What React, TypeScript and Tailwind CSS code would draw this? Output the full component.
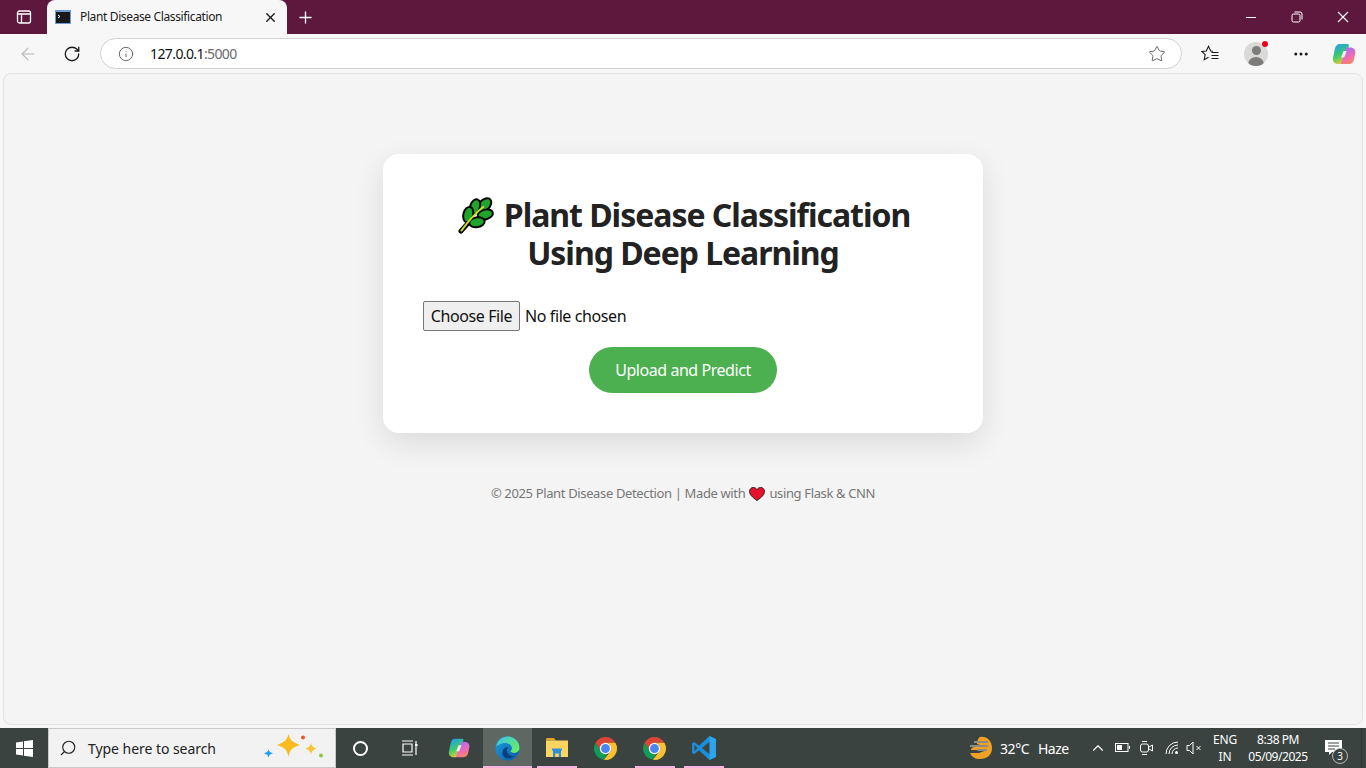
import { ArrowLeft, RotateCw, Info, Star, MoreHorizontal, X, Plus, Search, ChevronUp } from 'lucide-react';

const Copilot = ({ size = 24, id }: { size?: number; id: string }) => (
  <svg width={size} height={size} viewBox="0 0 24 24" className="shrink-0">
    <defs>
      <linearGradient id={`${id}A`} x1="0.2" y1="0" x2="0.6" y2="1">
        <stop offset="0" stopColor="#1f9df0" />
        <stop offset="0.55" stopColor="#3ecb6c" />
        <stop offset="1" stopColor="#f6cf2c" />
      </linearGradient>
      <linearGradient id={`${id}B`} x1="0.3" y1="0" x2="0.7" y2="1">
        <stop offset="0" stopColor="#a86bf2" />
        <stop offset="0.6" stopColor="#ef6db2" />
        <stop offset="1" stopColor="#f9885a" />
      </linearGradient>
    </defs>
    <path d="M8 2h7.500c1.200 0 1.800 1 1.300 2.200L11.500 20c-.6 1.400-1.500 2-3 2H6c-3.500 0-5.500-2.500-5-6L2.800 7C3.500 4 5 2 8 2z" fill={`url(#${id}A)`} />
    <path d="M15 5.500h3.500c3.300 0 5.300 2.300 4.800 5.500L22 17.500c-.7 3-2.500 4.500-5 4.500H9.500c-.8 0-1-.6-.5-1.300L13 10c.5-1.500 1-4.500 2-4.500z" fill={`url(#${id}B)`} />
    <path d="M11.500 9h3.200l-2.500 6.500H9z" fill="#fff" opacity="0.85" />
  </svg>
);

const EdgeLogo = () => (
  <svg width={25} height={25} viewBox="0 0 24 24">
    <defs>
      <linearGradient id="edA" x1="0" y1="0" x2="1" y2="1">
        <stop offset="0" stopColor="#1a9fe0" />
        <stop offset="1" stopColor="#0c59a4" />
      </linearGradient>
      <linearGradient id="edB" x1="0" y1="0" x2="1" y2="0.6">
        <stop offset="0" stopColor="#35c1f1" />
        <stop offset="1" stopColor="#66eb6e" />
      </linearGradient>
    </defs>
    <circle cx="12" cy="12" r="11.500" fill="url(#edA)" />
    <path d="M1 10C2.500 4 7 .5 12 .5c6.500 0 11.500 5 11.500 11 0 3-2.500 4.700-5 4.700-2 0-3.500-.8-3.800-1.700 2-1.200 2-3.500.7-5.200C13.500 7 10.500 6.300 7.500 7 4.500 7.700 2.500 9 1 10z" fill="url(#edB)" />
    <path d="M10.500 21c-3-1-4-4-3-7 1-2.500 3.500-3.500 5.500-3-2 1-2.500 4 0 6.500 1.500 1.500 4 2 6 1.500-2 2-5.500 3.200-8.500 2z" fill="#0b3f7e" />
  </svg>
);

const ChromeLogo = () => (
  <svg width={25} height={25} viewBox="0 0 48 48">
    <path d="M24 2A22 22 0 0 0 5 13l9.500 16.500L24 13h19A22 22 0 0 0 24 2z" fill="#db4437" />
    <path d="M5 13a22 22 0 0 0 16 32.800L30.500 29.500 24 33a9.500 9.500 0 0 1-9.500-3.500z" fill="#0f9d58" />
    <path d="M43 13H24a11 11 0 0 1 9.500 16.500L21 45.800A22 22 0 0 0 43 13z" fill="#fbc02d" />
    <circle cx="24" cy="24" r="11" fill="#fff" />
    <circle cx="24" cy="24" r="8.500" fill="#4a86f0" />
  </svg>
);

const VsCodeLogo = () => (
  <svg width={26} height={26} viewBox="0 0 24 24">
    <path d="M17 1l6 2.800v16.400L17 23 7.500 14 3 17.500 1 16.500v-9l2-1L7.500 10 17 1z" fill="#1c8fdc" />
    <path d="M17 1l6 2.800v16.400L17 23V1z" fill="#2aa6ee" />
    <path d="M17 6.500v11L10 12l7-5.500zM3.200 9.200L6 12l-2.800 2.800V9.200z" fill="#3b4441" />
  </svg>
);

const FolderLogo = () => (
  <svg width={22} height={22} viewBox="0 0 22 22">
    <path d="M0 2.500C0 1.700.6 1 1.500 1H8l2 2.500H0z" fill="#e0a526" />
    <rect x="0" y="3.500" width="22" height="16.500" fill="#fcd462" />
    <path d="M7 13h8v7h-2.200v-3.500H9.200V20H7z" fill="#2f8fd8" />
    <rect x="6" y="11.500" width="10" height="2" fill="#2f8fd8" />
  </svg>
);

const Sparkles = () => (
  <svg width={62} height={28} viewBox="0 0 62 28">
    <path d="M24.500 0c1.500 6 3.500 8 11.500 11C28 13.500 26 15.500 24.500 23c-1.500-7.500-3.500-9.500-11.500-12 8-3 10-5 11.500-11z" fill="#f9bb1d" />
    <path d="M47 9c.7 3 1.800 4 5.500 5.500C49 16 47.700 17 47 20.500c-.7-3.500-2-4.500-5.500-6C45 13 46.300 12 47 9z" fill="#f9c338" />
    <path d="M4.500 15c.5 2.300 1.300 3.300 4.500 4.300-3.200 1-4 2-4.500 4.700-.6-2.700-1.300-3.700-4.500-4.700 3.200-1 4-2 4.500-4.300z" fill="#1fa2ea" />
    <circle cx="39" cy="3.500" r="2" fill="#e8592a" />
    <circle cx="57" cy="21.500" r="2" fill="#8fc93a" />
  </svg>
);

const WeatherIcon = () => (
  <svg width={25} height={24} viewBox="0 0 25 24" className="shrink-0">
    <path d="M12 1c7-1 12 4 12 11s-5 11-12 11c-5 0-8-2-10-6h9l8-3H3c0-2 2-3 4-3l8-1-6-2c0-3 1-6 3-7z" fill="#f0a024" />
    <g fill="#8a8a86">
      <rect x="6" y="5" width="14" height="2" />
      <rect x="2" y="9" width="18" height="2" />
      <rect x="9" y="13" width="10" height="2" />
    </g>
  </svg>
);

const Herb = () => (
  <svg width={37} height={37} viewBox="0 0 38 38" className="mr-[9px] shrink-0">
    <path d="M3 35L12 25" fill="none" stroke="#000" strokeWidth="5" strokeLinecap="round" />
    <g fill="#1fa52b" stroke="#000" strokeWidth="2">
      <ellipse cx="27" cy="8.500" rx="8.500" ry="5.500" transform="rotate(-45 27 8.500)" />
      <ellipse cx="17.500" cy="10" rx="8" ry="5" transform="rotate(-72 17.500 10)" />
      <ellipse cx="10.500" cy="18" rx="8" ry="5" transform="rotate(-75 10.500 18)" />
      <ellipse cx="28" cy="18" rx="8" ry="5" transform="rotate(-15 28 18)" />
      <ellipse cx="19.500" cy="26" rx="8" ry="5" transform="rotate(-10 19.500 26)" />
    </g>
    <path d="M3.500 34.500C9 27 16 18 26 10" fill="none" stroke="#c6de21" strokeWidth="2" strokeLinecap="round" />
  </svg>
);

const Heart = () => (
  <svg width={16} height={14} viewBox="0 0 17 15" className="mx-[4px] shrink-0">
    <path d="M8.500 14.500C3 10.500.5 8 .5 4.800.5 2.300 2.300.5 4.600.5c1.700 0 3 .8 3.900 2.300C9.400 1.300 10.700.5 12.400.5c2.300 0 4.100 1.800 4.100 4.300 0 3.200-2.500 5.700-8 9.700z" fill="#e8112d" stroke="#1a1a1a" strokeWidth="1" />
  </svg>
);

const TaskItem = ({ children, active, line }: { children?: React.ReactNode; active?: boolean; line?: boolean }) => (
  <div className={`relative flex h-full w-[49px] shrink-0 items-center justify-center ${active ? 'bg-[#5f6763]' : ''}`}>
    {children}
    {line && <div className={`absolute bottom-0 h-[2px] bg-[#f5b5dc] ${active ? 'inset-x-0' : 'left-[5px] w-[40px]'}`} />}
  </div>
);

export default function App() {
  return (
    <div className="flex h-screen w-full flex-col overflow-hidden bg-[#f7f7f7] font-['Noto_Sans',sans-serif]">
      {/* title bar */}
      <div className="flex h-[34px] shrink-0 items-center bg-[#5e183e] text-white">
        <div className="flex w-[47px] shrink-0 items-center justify-center">
          <svg width={16} height={16} viewBox="0 0 16 16" fill="none" stroke="#fff" strokeWidth="1.300">
            <rect x="1.500" y="2" width="13" height="12" rx="2" />
            <path d="M1.500 5h13M5.500 5v9" />
          </svg>
        </div>
        <div className="flex h-full w-[240px] shrink-0 items-center rounded-t-lg bg-[#f7f7f7] pl-2 pr-[9px] text-[#1a1a1a]">
          <svg width={16} height={14} viewBox="0 0 16 14" className="shrink-0">
            <rect width="16" height="14" fill="#6f9bd1" />
            <rect x="1" y="2" width="14" height="11" fill="#17191c" />
            <path d="M3 5l2 1.500L3 8" stroke="#fff" fill="none" />
          </svg>
          <span className="ml-[9px] flex-1 text-[12px] tracking-[-0.37px]">Plant Disease Classification</span>
          <X size={15} strokeWidth={2.200} />
        </div>
        <div className="flex w-[36px] shrink-0 justify-center">
          <Plus size={19} strokeWidth={1.700} />
        </div>
        <div className="flex-1" />
        <div className="flex items-center text-white">
          <div className="flex w-[46px] justify-center">
            <svg width={12} height={12} viewBox="0 0 12 12" stroke="#fff"><path d="M1 6.500h10" /></svg>
          </div>
          <div className="flex w-[46px] justify-center">
            <svg width={12} height={12} viewBox="0 0 12 12" fill="none" stroke="#fff">
              <rect x="1" y="3" width="8" height="8" rx="1.500" />
              <path d="M3.500 1h5.500a2 2 0 0 1 2 2v5.500" />
            </svg>
          </div>
          <div className="flex w-[46px] justify-center">
            <svg width={12} height={12} viewBox="0 0 12 12" fill="none" stroke="#fff" strokeWidth="1.100"><path d="M1 1l10 10M11 1L1 11" /></svg>
          </div>
        </div>
      </div>

      {/* toolbar */}
      <div className="flex h-[39px] shrink-0 items-center bg-[#f7f7f7] pl-[18px] pr-[10px]">
        <ArrowLeft size={20} strokeWidth={1.300} className="shrink-0 text-[#b5b5b5]" />
        <RotateCw size={18} strokeWidth={1.700} className="ml-[25px] shrink-0 text-[#1a1a1a]" />
        <div className="ml-[19px] flex h-[31px] w-[1082px] shrink-0 items-center rounded-full border border-[#d2d2d2] bg-white pl-[17px] pr-[15px]">
          <Info size={16} strokeWidth={1.300} className="text-[#555]" />
          <span className="ml-[16px] flex-1 text-[14px] tracking-[-0.6px] text-[#111]">
            127.0.0.1<span className="text-[#6b6b6b]">:5000</span>
          </span>
          <Star size={18} strokeWidth={1.200} className="text-[#555]" />
        </div>
        <div className="ml-[18px] flex w-[20px] shrink-0 items-center justify-center">
          <svg width={18} height={17} viewBox="0 0 18 17" fill="none" stroke="#1a1a1a" strokeWidth="1.100">
            <path d="M12 6.300L9.700 6 7.500 1.300 5.300 6 .8 6.500l3.400 3.200-1 5L7.500 12.300" />
            <path d="M10.500 7.500h7M10.500 10.500h7M10.500 13.500h7" />
          </svg>
        </div>
        <div className="relative ml-[24px] h-[24px] w-[24px] shrink-0 overflow-hidden rounded-full bg-[#d9d9d7]">
          <div className="mx-auto mt-[4px] h-[9px] w-[9px] rounded-full bg-[#7d7c7a]" />
          <div className="mx-auto mt-[2px] h-[10px] w-[16px] rounded-t-full bg-[#7d7c7a]" />
        </div>
        <div className="relative -ml-[6px] -mt-[20px] h-[6px] w-[6px] shrink-0 rounded-full bg-[#e8001c]" />
        <MoreHorizontal size={18} strokeWidth={2} className="ml-[24px] shrink-0 text-[#1a1a1a]" />
        <div className="ml-[22px]"><Copilot id="cpTop" /></div>
      </div>

      {/* page */}
      <div className="mx-[3px] flex min-h-0 flex-1 flex-col items-center rounded-lg border border-[#e3e3e3] bg-[#f4f4f4]">
        <div className="mt-[80px] w-[600px] rounded-[16px] bg-white px-10 pb-10 pt-[42px] shadow-[0_10px_30px_rgba(0,0,0,0.1)]">
          <h1 className="text-center text-[32px] font-bold leading-[38px] tracking-[-1.03px] text-[#222]">
            <span className="ml-[2px] flex items-center justify-center"><Herb />Plant Disease Classification</span>
            <span className="block">Using Deep Learning</span>
          </h1>
          <div className="mt-[29px] flex items-center text-[16px] tracking-[-0.4px] text-[#111]">
            <div className="flex h-[30px] w-[97px] items-center justify-center rounded-[2px] border border-[#767676] bg-[#efefef]">Choose File</div>
            <span className="ml-[5px]">No file chosen</span>
          </div>
          <div className="mt-4 flex justify-center">
            <button className="h-[46px] w-[188px] rounded-full bg-[#4caf50] text-[16px] tracking-[-0.45px] text-white">Upload and Predict</button>
          </div>
        </div>
        <div className="mt-[51px] flex items-center text-[13px] tracking-[-0.36px] text-[#777]">
          © 2025 Plant Disease Detection | Made with <Heart /> using Flask &amp; CNN
        </div>
      </div>

      {/* taskbar */}
      <div className="mt-[3px] flex h-[40px] shrink-0 items-center bg-[#3a4340] text-white">
        <div className="flex h-full w-[48px] shrink-0 items-center justify-center">
          <svg width={17} height={17} viewBox="0 0 17 17" fill="#fff">
            <path d="M0 2.400l7-1v6.600H0zM8 1.300L17 0v8H8zM0 9h7v6.600l-7-1zM8 9h9v8l-9-1.300z" />
          </svg>
        </div>
        <div className="flex h-full w-[288px] shrink-0 items-center border border-[#c9c9c9] bg-[#f2f2f2] pl-[10px] text-[#222]">
          <Search size={18} strokeWidth={1.500} className="shrink-0 -scale-x-100" />
          <span className="ml-[11px] flex-1 text-[14px] tracking-[-0.05px]">Type here to search</span>
          <div className="mr-[9px] shrink-0"><Sparkles /></div>
        </div>
        <TaskItem>
          <div className="h-[15px] w-[15px] rounded-full border-2 border-white" />
        </TaskItem>
        <TaskItem>
          <svg width={18} height={16} viewBox="0 0 18 16" fill="none" stroke="#fff" strokeWidth="1.200">
            <path d="M1 1h11M1 15h11M2 4h9v8H2zM15 1v3M15 7v8" />
            <rect x="14" y="4" width="2.500" height="2.500" fill="#fff" stroke="none" />
          </svg>
        </TaskItem>
        <TaskItem><Copilot size={22} id="cpBar" /></TaskItem>
        <TaskItem active line><EdgeLogo /></TaskItem>
        <TaskItem line><FolderLogo /></TaskItem>
        <TaskItem><ChromeLogo /></TaskItem>
        <TaskItem line><ChromeLogo /></TaskItem>
        <TaskItem line><VsCodeLogo /></TaskItem>
        <div className="ml-[240px] shrink-0"><WeatherIcon /></div>
        <span className="ml-[7px] w-[29px] shrink-0 whitespace-nowrap text-[14px] tracking-[-0.4px]">32°C</span>
        <span className="ml-[9px] w-[30px] shrink-0 whitespace-nowrap text-[14px] tracking-[-0.5px]">Haze</span>
        <ChevronUp size={18} strokeWidth={1.500} className="ml-[21px] shrink-0" />
        <svg width={15} height={10} viewBox="0 0 15 10" fill="none" stroke="#fff" className="ml-[8px] shrink-0">
          <rect x="0.500" y="0.500" width="12.500" height="8" />
          <rect x="2" y="2" width="5" height="5" fill="#fff" stroke="none" />
          <path d="M14.500 3v3" />
        </svg>
        <svg width={13} height={16} viewBox="0 0 13 16" fill="none" stroke="#fff" className="ml-[10px] shrink-0">
          <rect x="0.500" y="4" width="8" height="8" rx="2" />
          <path d="M9 7l3.500-2v6L9 9M2 1.500h5M2 14.500h5" />
        </svg>
        <svg width={14} height={14} viewBox="0 0 14 14" fill="none" stroke="#fff" className="ml-[12px] shrink-0">
          <path d="M1 13A12 12 0 0 1 13 1M4 13a9 9 0 0 1 9-9M7 13a6 6 0 0 1 6-6" />
          <circle cx="11.500" cy="11.500" r="1.500" fill="#fff" stroke="none" />
        </svg>
        <svg width={16} height={14} viewBox="0 0 16 14" fill="none" stroke="#fff" className="ml-[7px] shrink-0">
          <path d="M1 4.500h2.500L7 1v12L3.500 9.500H1zM10.500 5l4 4M14.500 5l-4 4" />
        </svg>
        <div className="ml-[7px] flex w-[32px] shrink-0 flex-col items-center text-[12px] leading-[17px] tracking-[-0.2px]">
          <span>ENG</span>
          <span>IN</span>
        </div>
        <div className="ml-[5px] flex w-[64px] shrink-0 flex-col items-center text-[12px] leading-[17px] tracking-[-0.45px]">
          <span>8:38 PM</span>
          <span>05/09/2025</span>
        </div>
        <div className="relative ml-[15px] h-[24px] w-[24px] shrink-0">
          <svg width={17} height={16} viewBox="0 0 17 16" className="absolute left-0 top-[4px]">
            <path d="M0 0h17v12H7l-3 3v-3H0z" fill="#fff" />
            <path d="M3 3h11M3 6h11M3 9h7" stroke="#3a4340" />
          </svg>
          <div className="absolute left-[7px] top-[12px] flex h-[16px] w-[16px] items-center justify-center rounded-full border border-[#bbb] bg-[#3a4340] text-[10px]">3</div>
        </div>
        <div className="ml-auto mr-[4px] h-full w-px shrink-0 bg-[#2b3230]" />
      </div>
    </div>
  );
}
